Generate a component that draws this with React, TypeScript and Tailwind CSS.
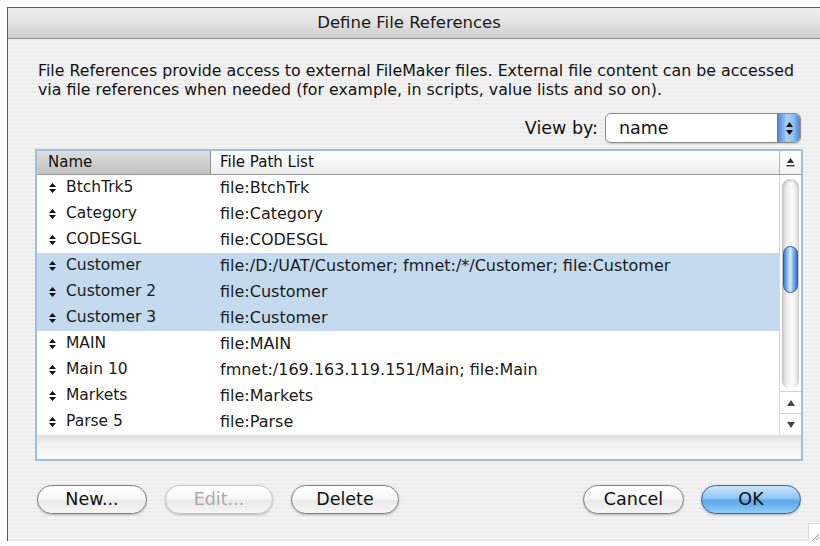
import React from "react";

type Ref = { name: string; path: string; selected?: boolean };

const refs: Ref[] = [
  { name: "BtchTrk5", path: "file:BtchTrk" },
  { name: "Category", path: "file:Category" },
  { name: "CODESGL", path: "file:CODESGL" },
  { name: "Customer", path: "file:/D:/UAT/Customer; fmnet:/*/Customer; file:Customer", selected: true },
  { name: "Customer 2", path: "file:Customer", selected: true },
  { name: "Customer 3", path: "file:Customer", selected: true },
  { name: "MAIN", path: "file:MAIN" },
  { name: "Main 10", path: "fmnet:/169.163.119.151/Main; file:Main" },
  { name: "Markets", path: "file:Markets" },
  { name: "Parse 5", path: "file:Parse" },
];

// little up/down handle used to drag a row
function MoveHandle() {
  return (
    <svg width="7" height="10" viewBox="0 0 7 10">
      <path d="M3.5 0 L7 4 L0 4 Z" fill="#111" />
      <path d="M3.5 10 L7 6 L0 6 Z" fill="#111" />
    </svg>
  );
}

function SortGlyph() {
  return (
    <svg width="9" height="10" viewBox="0 0 9 10">
      <path d="M4.5 0 L8 5 L1 5 Z" fill="#333" />
      <rect x="0.5" y="7" width="8" height="1.4" fill="#333" />
    </svg>
  );
}

function AquaButton({
  label,
  width,
  disabled,
  primary,
}: {
  label: string;
  width: string;
  disabled?: boolean;
  primary?: boolean;
}) {
  const base =
    "h-[29px] rounded-full flex items-center justify-center text-[17.5px] shadow-[0_1px_2px_rgba(0,0,0,0.25)]";
  if (primary) {
    return (
      <div
        className={`${base} ${width} border border-[#3d5f9c] bg-[linear-gradient(180deg,#cbe6fb_0%,#8fc4f2_45%,#5aa6ea_55%,#8fd0fb_100%)] text-[#111]`}
      >
        {label}
      </div>
    );
  }
  return (
    <div
      className={`${base} ${width} border ${
        disabled ? "border-[#c4c4c4] text-[#a9a9a9]" : "border-[#7f7f7f] text-[#111]"
      } bg-[linear-gradient(180deg,#ffffff_0%,#f7f7f7_45%,#e9e9e9_55%,#f6f6f6_100%)]`}
    >
      {label}
    </div>
  );
}

function ScrollBar() {
  return (
    <div className="w-[22px] flex flex-col bg-white border-l border-[#d6d6d6]">
      <div className="flex-1 flex flex-col px-[2px] pt-[4px] pb-[2px]">
        <div className="flex-1 flex flex-col rounded-full bg-[linear-gradient(90deg,#cfcfcf_0%,#f4f4f4_35%,#fdfdfd_60%,#dcdcdc_100%)] shadow-[inset_0_2px_3px_rgba(0,0,0,0.18)]">
          <div className="h-[67px]" />
          <div className="h-[47px] mx-[1px] rounded-full border border-[#2b5aa8] bg-[linear-gradient(90deg,#3f7fd6_0%,#a8d3fb_35%,#d8eeff_50%,#7fb8f0_70%,#3a78d0_100%)]" />
        </div>
      </div>
      <div className="h-[22px] flex items-center justify-center border-t border-[#d0d0d0]">
        <svg width="8" height="6" viewBox="0 0 8 6">
          <path d="M4 0 L8 6 L0 6 Z" fill="#444" />
        </svg>
      </div>
      <div className="h-[22px] flex items-center justify-center border-t border-[#d0d0d0]">
        <svg width="8" height="6" viewBox="0 0 8 6">
          <path d="M0 0 L8 0 L4 6 Z" fill="#444" />
        </svg>
      </div>
    </div>
  );
}

export default function App() {
  return (
    <div
      className="w-[820px] h-[546px] bg-white overflow-hidden pt-[7px] pl-[7px]"
      style={{ fontFamily: '"DejaVu Sans", "Liberation Sans", sans-serif' }}
    >
      <div className="relative w-[813px] h-[534px] flex flex-col border-l border-t border-[#5c5c5c]">
        {/* title bar */}
        <div className="h-[31px] flex items-center justify-center pr-[10px] border-b border-[#8f8f8f] bg-[linear-gradient(180deg,#eeeeee_0%,#e2e2e2_50%,#cdcdcd_100%)] text-[16.5px] text-[#1a1a1a]">
          Define File References
        </div>

        <div className="flex-1 flex flex-col bg-[repeating-linear-gradient(180deg,#ececec_0px,#ececec_2px,#f4f4f4_2px,#f4f4f4_4px)]">
          <p className="pl-[30px] pr-[8px] pt-[22px] text-[15.8px] leading-[19px] text-[#111] whitespace-nowrap">
            File References provide access to external FileMaker files. External file content can be accessed
            <br />
            via file references when needed (for example, in scripts, value lists and so on).
          </p>

          {/* view by popup */}
          <div className="flex items-center justify-end gap-[7px] pr-[19px] mt-[14px]">
            <span className="text-[17.5px] text-[#111]">View by:</span>
            <div className="w-[196px] h-[30px] flex rounded-[6px] border border-[#8c8c8c] bg-white overflow-hidden shadow-[0_1px_1px_rgba(0,0,0,0.15)]">
              <div className="flex-1 flex items-center pl-[13px] text-[17.5px] text-[#111]">name</div>
              <div className="w-[23px] flex flex-col items-center justify-center gap-[3px] bg-[linear-gradient(90deg,#4d86d8_0%,#a9d2f8_40%,#8cc0f2_70%,#4a84d4_100%)] border-l border-[#5a7fb8]">
                <svg width="7" height="5" viewBox="0 0 7 5">
                  <path d="M3.5 0 L7 5 L0 5 Z" fill="#111" />
                </svg>
                <svg width="7" height="5" viewBox="0 0 7 5">
                  <path d="M0 0 L7 0 L3.5 5 Z" fill="#111" />
                </svg>
              </div>
            </div>
          </div>

          {/* reference list */}
          <div className="ml-[27px] mr-[17px] mt-[6px] h-[312px] flex flex-col border-2 border-[#9dbfe4] bg-white">
            <div className="h-[24px] flex border-b border-[#9a9a9a] text-[15px] text-[#111]">
              <div className="w-[174px] flex items-center pl-[11px] border-r border-[#8f8f8f] bg-[linear-gradient(180deg,#dedede_0%,#cfcfcf_50%,#c2c2c2_100%)]">
                Name
              </div>
              <div className="flex-1 flex items-center pl-[9px] bg-[linear-gradient(180deg,#ffffff_0%,#f7f7f7_50%,#ececec_100%)]">
                File Path List
              </div>
              <div className="w-[22px] flex items-center justify-center border-l border-[#b5b5b5] bg-[linear-gradient(180deg,#ffffff_0%,#f2f2f2_100%)]">
                <SortGlyph />
              </div>
            </div>

            <div className="h-[260px] flex">
              <div className="flex-1 flex flex-col">
                {refs.map((r) => (
                  <div
                    key={r.name}
                    className={`h-[26px] flex items-center text-[#1a1a1a] ${
                      r.selected ? "bg-[#c4daef]" : "bg-white"
                    }`}
                  >
                    <div className="w-[174px] flex items-center">
                      <div className="w-[29px] flex justify-center pl-[1px]">
                        <MoveHandle />
                      </div>
                      <span className="text-[15.5px]">{r.name}</span>
                    </div>
                    <span className="pl-[9px] text-[16px]">{r.path}</span>
                  </div>
                ))}
              </div>
              <ScrollBar />
            </div>

            <div className="flex-1 bg-[linear-gradient(180deg,#dedede_0%,#f0f0f0_30%,#fbfbfb_100%)]" />
          </div>

          {/* dialog buttons */}
          <div className="flex items-center mt-[24px] pl-[29px] pr-[19px]">
            <div className="flex gap-[18px]">
              <AquaButton label="New..." width="w-[110px]" />
              <AquaButton label="Edit..." width="w-[108px]" disabled />
              <AquaButton label="Delete" width="w-[108px]" />
            </div>
            <div className="flex-1" />
            <div className="flex gap-[17px]">
              <AquaButton label="Cancel" width="w-[101px]" />
              <AquaButton label="OK" width="w-[100px]" primary />
            </div>
          </div>
        </div>

        {/* resize grip */}
        <div className="absolute right-0 bottom-0 w-[12px] h-[18px] bg-white border-l border-t border-[#d8d8d8] flex items-end justify-end">
          <svg width="10" height="10" viewBox="0 0 10 10">
            <path d="M9 3 L3 9 M9 6 L6 9" stroke="#9a9a9a" strokeWidth="1" />
          </svg>
        </div>
      </div>
    </div>
  );
}
